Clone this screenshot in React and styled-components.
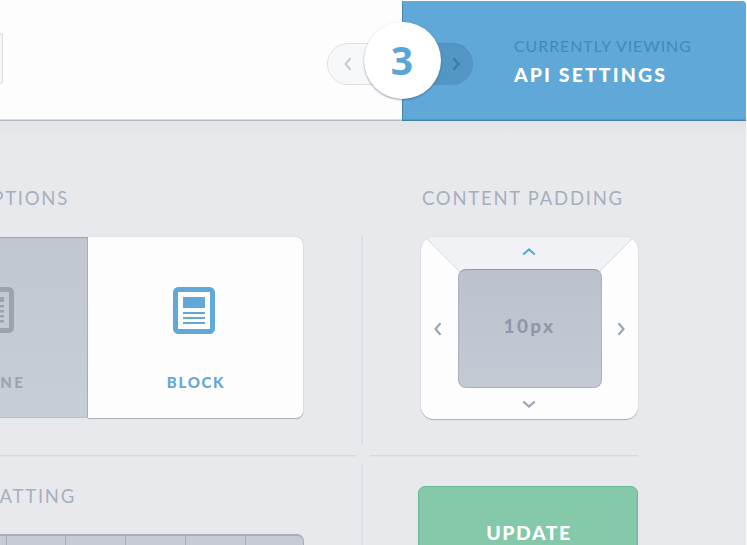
import React from 'react';
import styled, { createGlobalStyle, css } from 'styled-components';

const GlobalStyle = createGlobalStyle`
  *, *::before, *::after { box-sizing: border-box; }
  body { margin: 0; background: #fbfcfc; font-family: Lato, 'Open Sans', sans-serif; overflow: hidden; }
  button { font: inherit; border: 0; padding: 0; margin: 0; background: none; }
`;

const blue = '#60a8d7';

const Window = styled.div`
  display: flex;
  flex-direction: column;
  width: 746px;
  height: 544px;
  margin-top: 1px;
  border-top-right-radius: 4px;
  overflow: hidden;
  background: #e8e9ed;
`;

const Header = styled.header`
  position: relative;
  display: flex;
  flex: none;
  height: 120px;
`;

const Toolbar = styled.div`
  display: flex;
  align-items: flex-start;
  width: 402px;
  padding-top: 32px;
  background: #fdfdfd;
  border-bottom: 1px solid #b5bbc1;
  box-shadow: inset 0 -1px 0 #d9dcdf;
`;

const ToolbarField = styled.div`
  width: 3px;
  height: 51px;
  border: 1px solid #d8dee2;
  border-left: 0;
  border-radius: 0 4px 4px 0;
  background: #f5f7f9;
`;

const Viewing = styled.div`
  flex: 1;
  padding: 35px 0 0 111px;
  background: ${blue};
  border-left: 1px solid #4486b2;
  border-bottom: 1px solid #4380aa;
  box-shadow: inset 0 -1px 0 #5799c5;
  white-space: nowrap;
`;

const Eyebrow = styled.div`
  font-size: 16px;
  line-height: 20px;
  letter-spacing: 0.9px;
  color: #4688b6;
`;

const ViewTitle = styled.div`
  margin-top: 8px;
  font-size: 19.5px;
  line-height: 22px;
  font-weight: 900;
  letter-spacing: 2.1px;
  color: #fff;
`;

const Pager = styled.div`
  position: absolute;
  left: 327px;
  top: 21px;
  display: flex;
  align-items: center;
  justify-content: center;
  width: 146px;
  height: 77px;
`;

const PagerHalf = styled.button`
  display: flex;
  align-items: center;
  height: 42px;
  flex: 1;
  && { margin-top: 6px; }
  ${({ $side }) => $side === 'prev' ? css`
    justify-content: flex-start;
    padding-left: 16px;
    margin-right: -38px;
    border: 1px solid #dfe1e5;
    border-right: 0;
    border-radius: 21px 0 0 21px;
    background: #f7f8fa;
    color: #c9ccd0;
  ` : css`
    justify-content: flex-end;
    padding-right: 13px;
    margin-left: -38px;
    border-radius: 0 21px 21px 0;
    background: #5196c5;
    box-shadow: inset 0 1px 0 #4c8fbe;
    color: #3c7cab;
  `}
`;

const PageNumber = styled.div`
  z-index: 1;
  flex: none;
  width: 77px;
  height: 77px;
  border-radius: 50%;
  background: #fff;
  box-shadow: 0 1px 2px rgba(40, 60, 85, 0.5);
  color: #58a5d8;
  font-family: 'Noto Sans', sans-serif;
  font-size: 39px;
  font-weight: 700;
  line-height: 75px;
  text-align: center;
`;

const Body = styled.main`
  display: grid;
  flex: 1;
  grid-template-columns: 356px 14px 268px;
  grid-template-rows: 334px 2px 1fr;
  min-height: 0;
  background: linear-gradient(#e2e4e8, #e8e9ed 18px);
`;

const Section = styled.section`
  display: flex;
  flex-direction: column;
  min-width: 0;
  overflow: ${({ $clip }) => ($clip ? 'hidden' : 'visible')};
  align-items: ${({ $clip }) => ($clip ? 'flex-end' : 'stretch')};
  padding: ${({ $pad }) => $pad};
`;

const Heading = styled.h2`
  flex: none;
  margin: 0;
  margin-right: ${({ $right }) => $right || 0}px;
  font-size: 18.5px;
  line-height: 22px;
  font-weight: 400;
  letter-spacing: 1.75px;
  color: #a5b0be;
  white-space: nowrap;
`;

const Rule = styled.div`
  height: 2px;
  background: linear-gradient(#d6d9dd 50%, #e0e2e6 50%);
`;

const VerticalRule = styled.div`
  width: 2px;
  margin-left: 5px;
  margin-top: ${({ $top }) => $top}px;
  height: ${({ $height }) => $height}px;
  background: linear-gradient(90deg, #dfe1e5 50%, #dadce1 50%);
`;

const Options = styled.div`
  display: flex;
  flex: none;
  width: 430px;
  height: 182px;
  margin-top: 28px;
`;

const Option = styled.button`
  display: flex;
  flex: none;
  width: 215px;
  flex-direction: column;
  align-items: center;
  height: 181px;
  padding-top: 50px;
  font-size: 15px;
  line-height: 20px;
  font-weight: 900;
  ${({ $active }) => $active ? css`
    padding-right: 3px;
    border-radius: 0 7px 7px 0;
    background: #fdfdfd;
    box-shadow: 0 1px 1px rgba(110, 120, 130, 0.5), 0 0 1px rgba(110, 120, 130, 0.5);
    color: ${blue};
    letter-spacing: 1.7px;
  ` : css`
    padding-left: 25px;
    border-radius: 7px 0 0 7px;
    background: linear-gradient(#c1c7d1, #c6ced6);
    box-shadow: inset 0 1px 1px #9ba4af, inset 0 -1px 0 #b7bec6, inset -1px 0 1px #b0b7c0;
    color: #9ba3ad;
    letter-spacing: 2.2px;
  `}
`;

const OptionLabel = styled.span`
  margin-top: 38px;
  padding-left: ${({ $shift }) => $shift}px;
`;

const FormatBar = styled.div`
  display: flex;
  flex: none;
  width: 418px;
  height: 40px;
  margin-top: 27px;
  margin-right: 52px;
  border: 1px solid #a5afba;
  border-top-width: 2px;
  border-radius: 7px;
  background: #c7cbd5;
`;

const FormatCell = styled.div`
  flex: 1;
  & + & { border-left: 1px solid #a9b1bc; }
  &:last-child { flex: none; width: 58px; }
`;

const PaddingFrame = styled.div`
  flex: none;
  width: 217px;
  height: 182px;
  margin: 28px 0 0 -1px;
  border-radius: 13px;
  box-shadow: 0 1px 1px rgba(110, 120, 130, 0.5), 0 0 1px rgba(110, 120, 130, 0.45);
`;

const PaddingBox = styled.div`
  position: relative;
  display: grid;
  grid-template-columns: 37px 144px 36px;
  grid-template-rows: 32px 119px 31px;
  place-items: center;
  height: 182px;
  border-radius: 13px;
  overflow: hidden;
  background: #fdfdfd;
  color: #98a5b3;
`;

const Facet = styled.svg`
  position: absolute;
  left: 0;
  top: 0;
`;

const PaddingValue = styled.div`
  grid-area: 2 / 2;
  z-index: 1;
  width: 144px;
  height: 119px;
  border: 1px solid #a9b1bf;
  border-top-color: #929ba8;
  border-radius: 8px;
  background: linear-gradient(#bcc2cd, #c3cad4);
  color: #8f98a8;
  font-size: 19px;
  font-weight: 900;
  line-height: 112px;
  letter-spacing: 2.3px;
  padding-right: 1px;
  text-align: center;
`;

const Step = styled.button`
  z-index: 1;
  display: flex;
  grid-area: ${({ $area }) => $area};
  color: ${({ $active }) => ($active ? '#57a8da' : 'inherit')};
  padding: ${({ $pad }) => $pad || 0};
`;

const UpdateButton = styled.button`
  flex: none;
  width: 220px;
  height: 92px;
  margin-left: -4px;
  padding-left: 2px;
  border: 1px solid #68b993;
  border-radius: 7px;
  background: #86c8aa;
  color: #fff;
  font-size: 19.5px;
  font-weight: 900;
  line-height: 92px;
  letter-spacing: 1.5px;
  text-align: center;
`;

const chevrons = {
  up: 'M1.2 6.5 7 1.5l5.8 5',
  down: 'M1.2 1.5 7 6.5l5.8-5',
  left: 'M6.5 1.2 1.5 7l5 5.8',
  right: 'M1.5 1.2 6.5 7l-5 5.8',
};

function Chevron({ dir }) {
  const vertical = dir === 'up' || dir === 'down';
  return (
    <svg width={vertical ? 14 : 8} height={vertical ? 8 : 14} fill="none" stroke="currentColor" strokeWidth="2.1">
      <path d={chevrons[dir]} />
    </svg>
  );
}

function BlockIcon() {
  return (
    <svg width="42" height="47" fill="currentColor">
      <rect x="2.5" y="2.5" width="37" height="42" rx="2.8" fill="none" stroke="currentColor" strokeWidth="5" />
      <path d="M10 10h22v11H10zM10 25h22v2H10zM10 30h22v2H10zM10 35h22v2H10z" />
    </svg>
  );
}

function InlineIcon() {
  return (
    <svg width="42" height="47" fill="currentColor">
      <rect x="2.5" y="2.5" width="37" height="41" rx="2.8" fill="none" stroke="currentColor" strokeWidth="5" />
      <path d="M10 10h22v5H10zM10 18h22v2.4H10zM10 23h22v2.4H10zM10 28h22v2.4H10zM10 33h22v2.4H10z" />
    </svg>
  );
}

export default function App() {
  return (
    <>
      <GlobalStyle />
      <Window>
        <Header>
          <Toolbar><ToolbarField /></Toolbar>
          <Viewing>
            <Eyebrow>CURRENTLY VIEWING</Eyebrow>
            <ViewTitle>API SETTINGS</ViewTitle>
          </Viewing>
          <Pager>
            <PagerHalf $side="prev" aria-label="Previous"><Chevron dir="left" /></PagerHalf>
            <PageNumber>3</PageNumber>
            <PagerHalf $side="next" aria-label="Next"><Chevron dir="right" /></PagerHalf>
          </Pager>
        </Header>
        <Body>
          <Section $clip $pad="66px 53px 0 0">
            <Heading $right={234}>OPTIONS</Heading>
            <Options>
              <Option><InlineIcon /><OptionLabel $shift={2}>INLINE</OptionLabel></Option>
              <Option $active><BlockIcon /><OptionLabel $shift={4}>BLOCK</OptionLabel></Option>
            </Options>
          </Section>
          <VerticalRule $top={114} $height={210} />
          <Section $pad="66px 0 0 52px">
            <Heading>CONTENT PADDING</Heading>
            <PaddingFrame>
              <PaddingBox>
                <Facet width="217" height="60">
                  <path d="M4 0 39 35H179L213 0Z" fill="#f1f2f6" />
                  <path d="M4 0 40 36M213 0 177 36" stroke="#d9dbe0" fill="none" />
                </Facet>
                <Step $area="1 / 2" $active $pad="0 2px 3px 0" aria-label="Top"><Chevron dir="up" /></Step>
                <Step $area="2 / 1" $pad="0 4px 0 0" aria-label="Left"><Chevron dir="left" /></Step>
                <PaddingValue>10px</PaddingValue>
                <Step $area="2 / 3" $pad="0 0 0 2px" aria-label="Right"><Chevron dir="right" /></Step>
                <Step $area="3 / 2" $pad="0 2px 0 0" aria-label="Bottom"><Chevron dir="down" /></Step>
              </PaddingBox>
            </PaddingFrame>
          </Section>
          <Rule />
          <div />
          <Rule />
          <Section $clip $pad="28px 0 0 0">
            <Heading $right={280}>FORMATTING</Heading>
            <FormatBar>
              {[0, 1, 2, 3, 4, 5, 6].map((i) => <FormatCell key={i} />)}
            </FormatBar>
          </Section>
          <VerticalRule $top={7} $height={82} />
          <Section $pad="29px 0 0 52px">
            <UpdateButton>UPDATE</UpdateButton>
          </Section>
        </Body>
      </Window>
    </>
  );
}
